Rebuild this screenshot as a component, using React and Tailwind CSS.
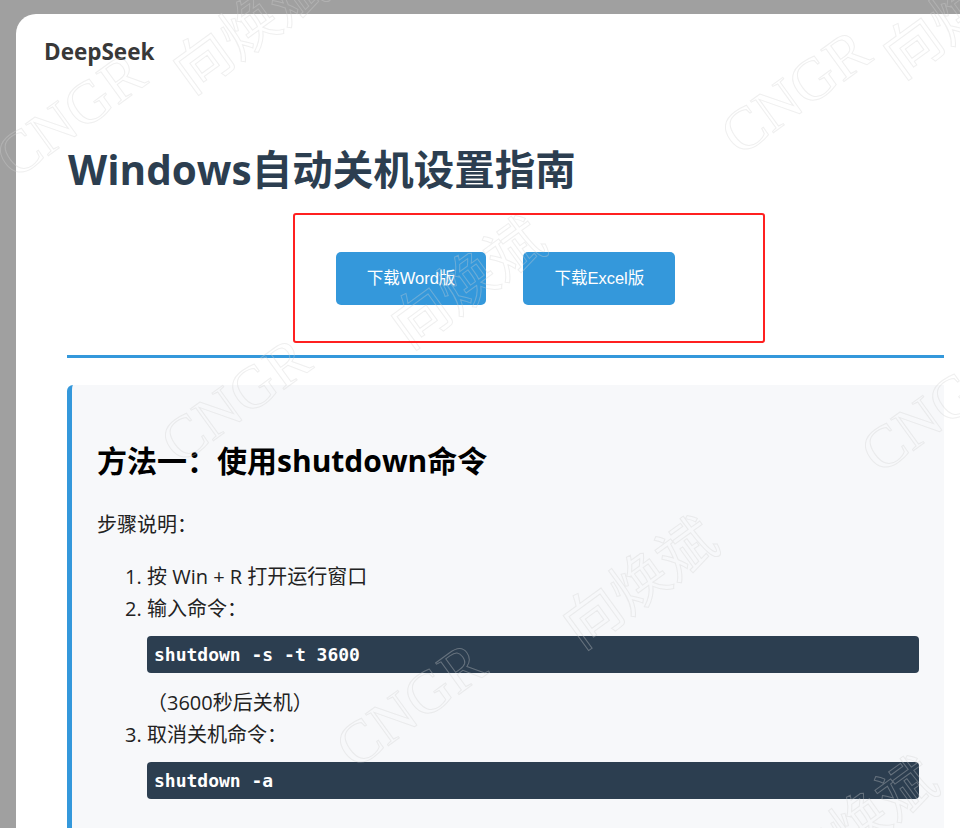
import React from "react";

const sans = "font-['Open_Sans','Noto_Sans_CJK_SC',sans-serif]";

// faint outlined watermark text scattered over the page
const WATERMARKS = [
  { text: "CNGR", cls: "left-[-13px] top-[85px] text-[60px] font-['Liberation_Serif',serif]" },
  { text: "向焕斌", cls: "left-[160px] top-[-5px] text-[58px] font-['Noto_Sans_CJK_SC',sans-serif]" },
  { text: "CNGR", cls: "left-[712px] top-[62px] text-[60px] font-['Liberation_Serif',serif]" },
  { text: "向焕斌", cls: "left-[378px] top-[250px] text-[58px] font-['Noto_Sans_CJK_SC',sans-serif]" },
  { text: "CNGR", cls: "left-[152px] top-[370px] text-[60px] font-['Liberation_Serif',serif]" },
  { text: "CNGR", cls: "left-[852px] top-[380px] text-[60px] font-['Liberation_Serif',serif]" },
  { text: "向焕斌", cls: "left-[550px] top-[550px] text-[58px] font-['Noto_Sans_CJK_SC',sans-serif]" },
  { text: "CNGR", cls: "left-[327px] top-[675px] text-[60px] font-['Liberation_Serif',serif]" },
  { text: "向焕斌", cls: "left-[770px] top-[790px] text-[58px] font-['Noto_Sans_CJK_SC',sans-serif]" },
  { text: "向焕斌", cls: "left-[870px] top-[-20px] text-[58px] font-['Noto_Sans_CJK_SC',sans-serif]" },
];

function Code({ children }) {
  return (
    <pre className="rounded-[4px] bg-[#2c3e50] px-[7px] py-[8px] font-['DejaVu_Sans_Mono',monospace] text-[18px] leading-[21px] font-bold text-white">
      {children}
    </pre>
  );
}

function DownloadButton({ children }) {
  return (
    <button
      type="button"
      className="h-[53px] rounded-[5px] bg-[#3498db] px-[31px] font-['Liberation_Sans','Noto_Sans_CJK_SC',sans-serif] text-[16.5px] text-white"
    >
      {children}
    </button>
  );
}

export default function App() {
  return (
    <div className={`relative h-[828px] w-[960px] overflow-hidden bg-[#a0a0a0] pl-[16px] pt-[14px] ${sans}`}>
      <div className="h-[900px] w-[980px] rounded-tl-[20px] bg-white pl-[28px] pt-[23px]">
        <div className="text-[22.5px] leading-[30px] font-bold text-[#383838]">DeepSeek</div>

        <main className="ml-[23px] mt-[77px] w-[877px]">
          <h1 className="pl-[1px] text-[40.5px] leading-[52px] font-bold text-[#2c3e50]">
            Windows自动关机设置指南
          </h1>

          <div className="mt-[56px] flex justify-center gap-[37px]">
            <DownloadButton>下载Word版</DownloadButton>
            <DownloadButton>下载Excel版</DownloadButton>
          </div>

          <div className="mt-[50px] h-[3px] bg-[#3498db]" />

          <section className="mt-[27px] h-[500px] rounded-tl-[6px] border-l-[5px] border-[#3498db] bg-[#f7f8fa] px-[25px] pt-[56px]">
            <h2 className="text-[30px] leading-[40px] font-bold text-black">方法一：使用shutdown命令</h2>
            <p className="mt-[28px] text-[20px] leading-[32px] text-[#222]">步骤说明：</p>
            <ol className="mt-[20px] list-decimal pl-[50px] text-[20px] leading-[32px] text-[#222]">
              <li>按 Win + R 打开运行窗口</li>
              <li>
                输入命令：
                <div className="mt-[11px]">
                  <Code>shutdown -s -t 3600</Code>
                </div>
                <div className="mt-[14px]">（3600秒后关机）</div>
              </li>
              <li>
                取消关机命令：
                <div className="mt-[11px]">
                  <Code>shutdown -a</Code>
                </div>
              </li>
            </ol>
          </section>
        </main>
      </div>

      {WATERMARKS.map((w, i) => (
        <span
          key={i}
          aria-hidden="true"
          className={`pointer-events-none absolute -rotate-[36deg] whitespace-nowrap leading-none text-transparent [-webkit-text-stroke:1px_rgba(210,210,210,0.35)] ${w.cls}`}
        >
          {w.text}
        </span>
      ))}

      {/* red highlight drawn over the download buttons */}
      <div className="pointer-events-none absolute left-[293px] top-[213px] h-[130px] w-[472px] rounded-[3px] border-2 border-[#ff2020]" />
    </div>
  );
}
